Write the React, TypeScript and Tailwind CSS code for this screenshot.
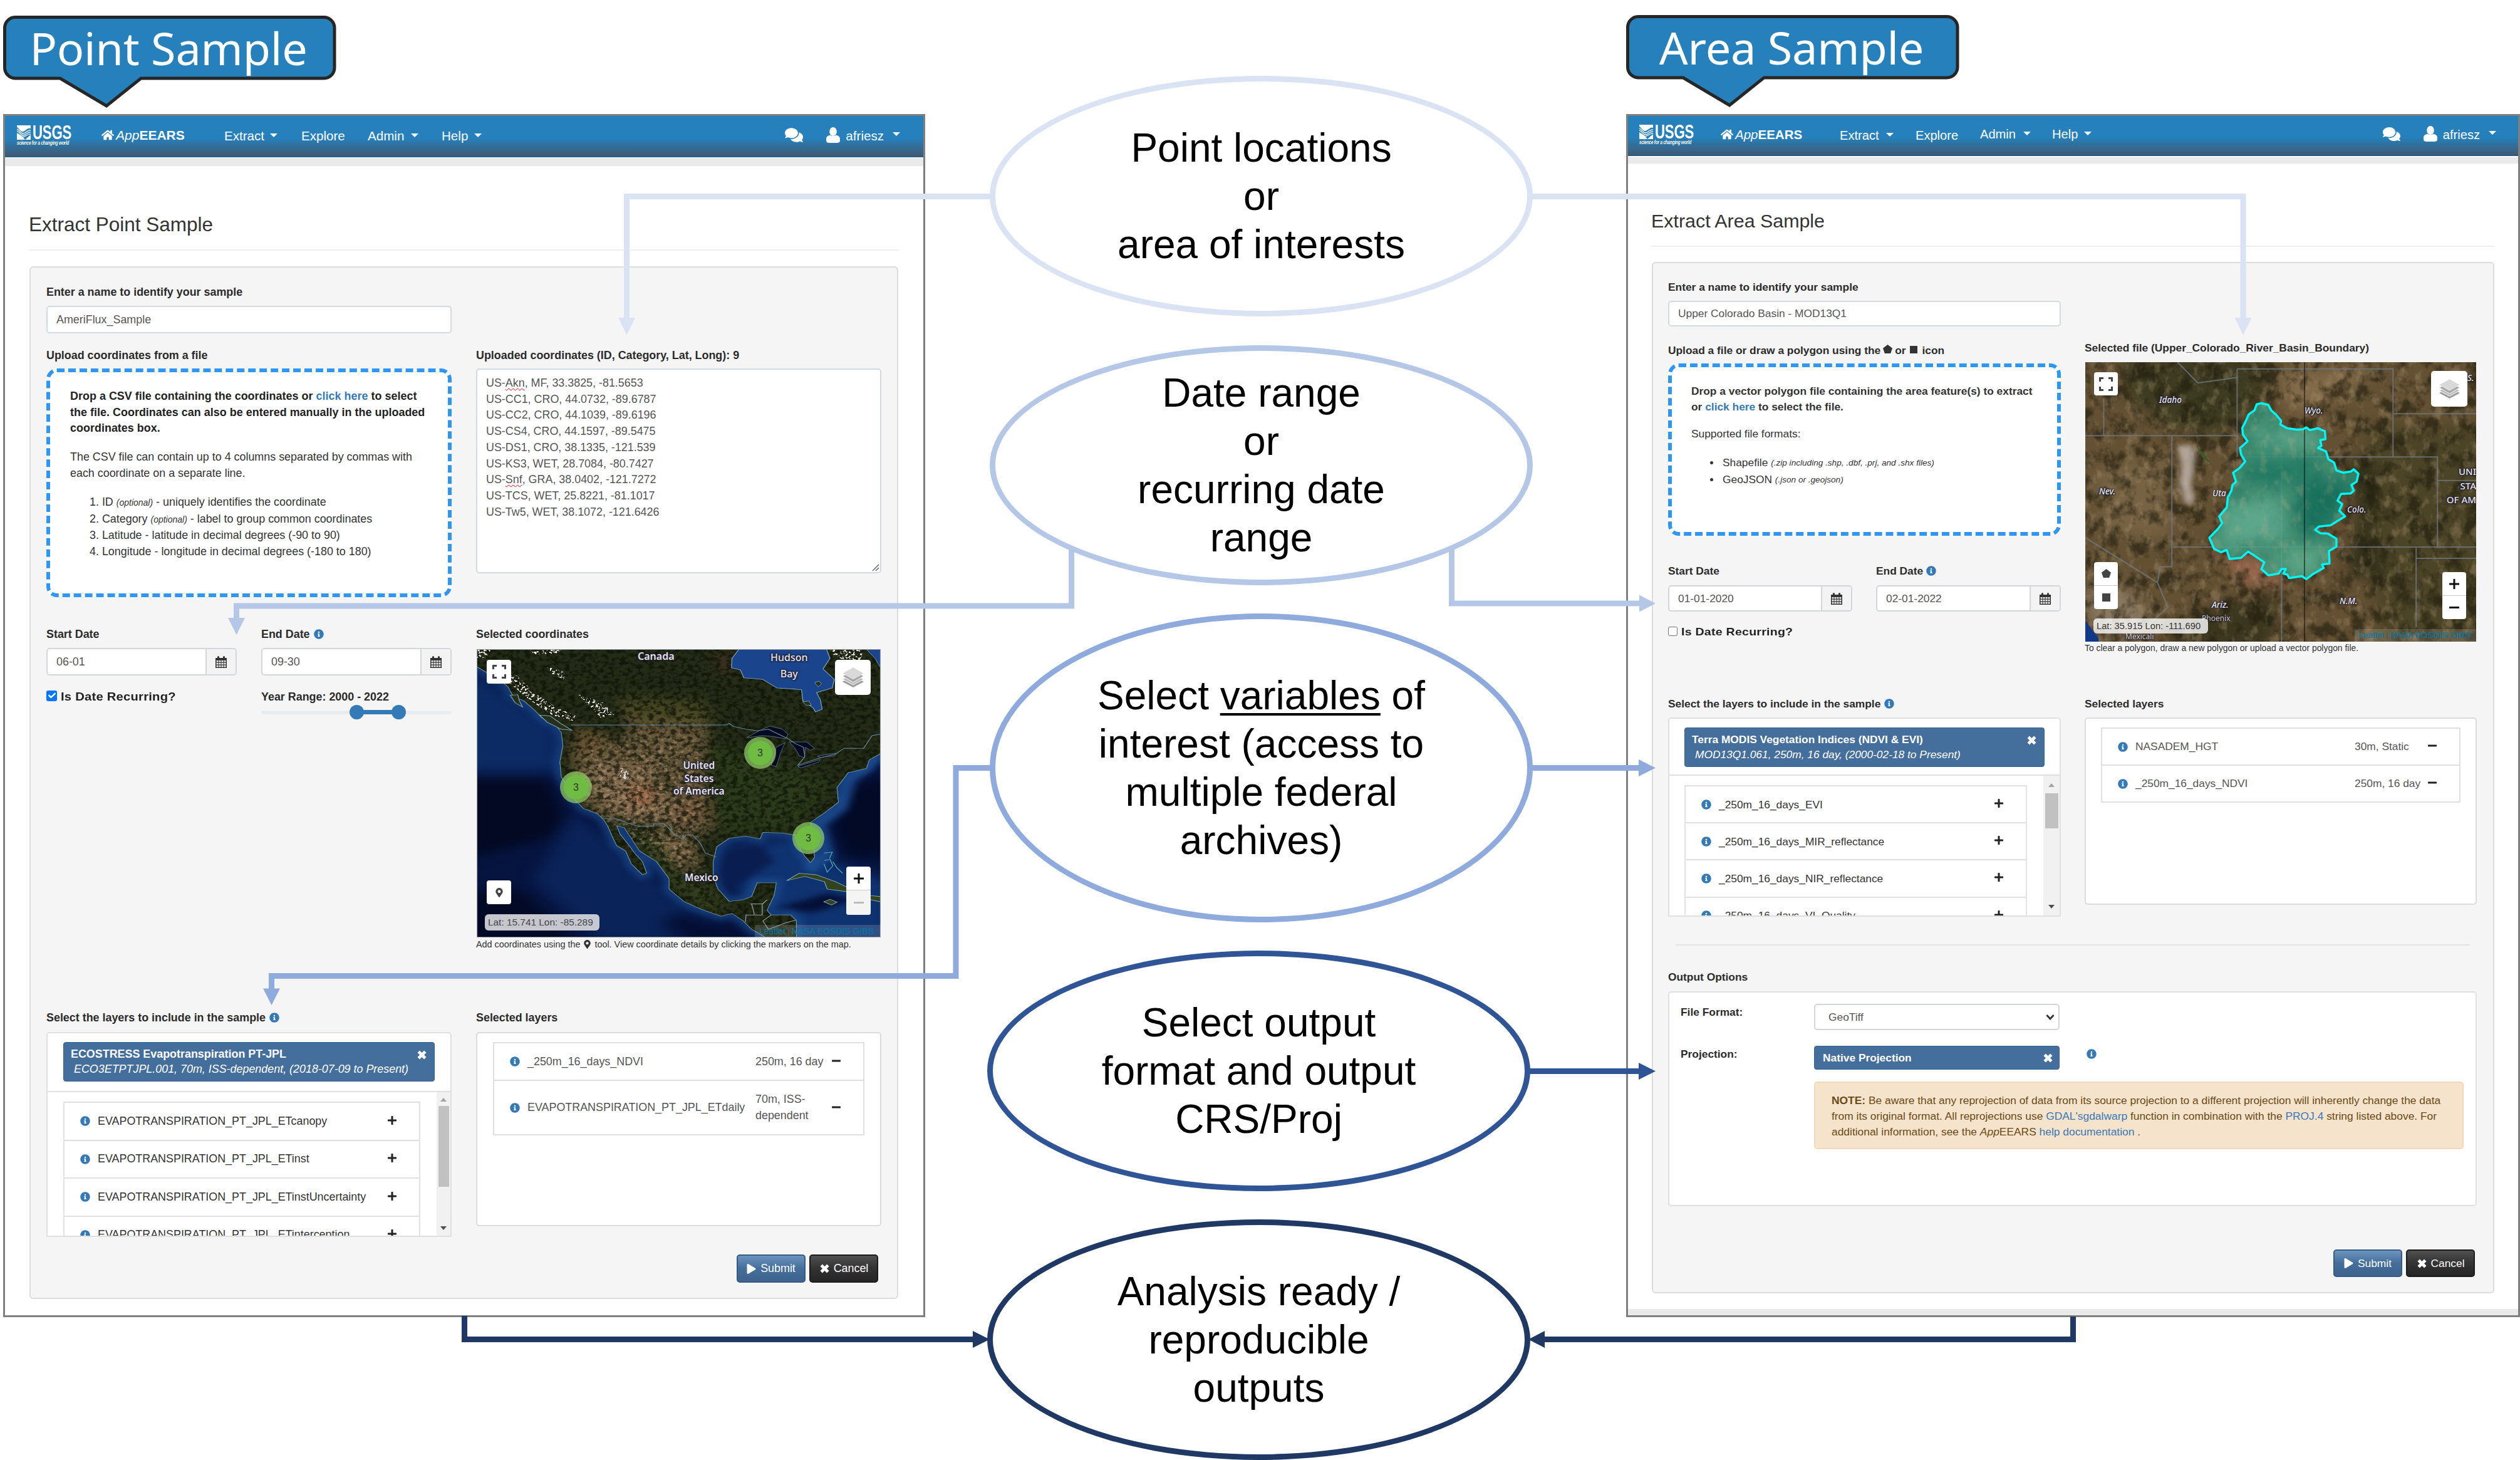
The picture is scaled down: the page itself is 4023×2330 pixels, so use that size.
import React from "react";
import {
  FaInfoCircle,
  FaPlus,
  FaMinus,
  FaHome,
  FaComments,
  FaMapMarkerAlt,
  FaPlay,
  FaCheck,
} from "react-icons/fa";

type Kids = { children?: React.ReactNode; className?: string };

/* ---------- small shared pieces ---------- */

const Info = ({ className = "" }: { className?: string }) => (
  <FaInfoCircle className={`size-4 shrink-0 text-[#337ab7] ${className}`} />
);

const Cross = ({ className = "" }: { className?: string }) => (
  <svg viewBox="0 0 16 16" className={`shrink-0 ${className}`}>
    <path d="M3 3L13 13M13 3L3 13" stroke="currentColor" strokeWidth="4.600" />
  </svg>
);

const Calendar = () => (
  <svg viewBox="0 0 18 19" className="h-[19px] w-[18px]" fill="#333">
    <path d="M0 3H3V1.500A1.500 1.500 0 0 1 6 1.500V3H12V1.500A1.500 1.500 0 0 1 15 1.500V3H18V19H0Z" />
    <path
      d="M1.500 7H4.500V9.500H1.500ZM5.500 7H8.500V9.500H5.500ZM9.500 7H12.500V9.500H9.500ZM13.500 7H16.500V9.500H13.500ZM1.500 10.700H4.500V13.500H1.500ZM5.500 10.700H8.500V13.500H5.500ZM9.500 10.700H12.500V13.500H9.500ZM13.500 10.700H16.500V13.500H13.500ZM1.500 14.700H4.500V17.500H1.500ZM5.500 14.700H8.500V17.500H5.500ZM9.500 14.700H12.500V17.500H9.500ZM13.500 14.700H16.500V17.500H13.500Z"
      fill="#eee"
    />
  </svg>
);

const UserIcon = ({ className = "" }: { className?: string }) => (
  <svg viewBox="0 0 22 25" className={`h-[25px] w-[22px] shrink-0 ${className}`} fill="#fff">
    <ellipse cx="11" cy="7" rx="5.800" ry="7" />
    <path d="M6.500 12.500C8 14.500 14 14.500 15.500 12.500C19 13.500 22 15 22 18.500V21.500C22 24 20 25 17 25H5C2 25 0 24 0 21.500V18.500C0 15 3 13.500 6.500 12.500Z" />
  </svg>
);

const Label = ({ children, className = "" }: Kids) => (
  <div className={`flex h-[26px] shrink-0 items-center whitespace-nowrap font-bold text-[#2b2b2b] ${className}`}>{children}</div>
);

const Caret = ({ className = "" }: { className?: string }) => (
  <svg viewBox="0 0 12 6" className={`h-[6px] w-3 shrink-0 ${className}`}>
    <path d="M0 0h12l-6 6z" fill="#fff" />
  </svg>
);

const Input = ({ children, className = "" }: Kids) => (
  <div className={`flex items-center rounded-[5px] border-2 border-[#d3dae1] bg-white pl-[14px] text-[#555] ${className}`}>{children}</div>
);

const DateInput = ({ value, className }: { value: string; className: string }) => (
  <div className={`flex overflow-hidden rounded-[5px] border-2 border-[#d3d6da] bg-white text-[#555] ${className}`}>
    <div className="flex flex-1 items-center pl-[14px]">{value}</div>
    <div className="flex w-12 items-center justify-center border-l-2 border-[#d3d6da] bg-[#f3f3f3]">
      <Calendar />
    </div>
  </div>
);

const Callout = ({ text, className }: { text: string; className: string }) => (
  <div className={`relative h-[149px] w-[532px] shrink-0 ${className}`}>
    <svg viewBox="0 0 532 149" className="absolute inset-0 size-full overflow-visible">
      <path
        d="M19 2.500H512A17 17 0 0 1 529 19.500V83A17 17 0 0 1 512 100H220L165 144L91 100H19A17 17 0 0 1 2.500 83V19.500A17 17 0 0 1 19 2.500Z"
        fill="#2580bb"
        stroke="#262626"
        strokeWidth="5"
      />
    </svg>
    <div className="relative flex h-[102px] items-center justify-center pr-[4px] font-['Noto_Sans'] text-[72px] leading-[102px] tracking-[-0.200px] text-white">
      {text}
    </div>
  </div>
);

const UsgsLogo = ({ className }: { className: string }) => (
  <div className={`flex shrink-0 flex-col text-white ${className}`}>
    <div className="flex h-[23px] items-center gap-[3px]">
      <svg viewBox="0 0 22 23" className="h-[23px] w-[22px] shrink-0">
        <path d="M0 0H22V5C17 3 13 10 9 10S3 4 0 3Z" fill="#fff" />
        <path d="M0 23V12L8 17L13 23ZM13 23L22 15V23Z" fill="#fff" />
        <path d="M0 6C4 7 6 13 10 13S17 7 22 8M0 9C4 10 6 16 10 16S17 10 22 11M7 19C12 20 17 13 22 14" fill="none" stroke="#fff" strokeWidth="1.300" />
      </svg>
      <span className="origin-left scale-x-[0.700] text-[32px] leading-[23px] font-bold tracking-[-0.500px]">USGS</span>
    </div>
    <span className="mt-[1px] origin-left scale-x-[0.720] text-[9px] leading-[9px] font-bold whitespace-nowrap italic tracking-[-0.300px]">
      science for a changing world
    </span>
  </div>
);

const Navbar = ({ area }: { area: boolean }) => (
  <>
    <div
      className={
        area
          ? "flex h-16 items-center border-b-2 border-[#235c85] bg-[linear-gradient(#2580bb_0%,#2580bb_55%,#405a74_100%)] pb-[2px] pl-[18px] text-[20.1px] text-white"
          : "flex h-[66px] items-center border-b-2 border-[#235c85] bg-[linear-gradient(#2580bb_0%,#2580bb_55%,#405a74_100%)] pb-[2px] pl-[19px] text-[20.6px] text-white"
      }
    >
      <UsgsLogo className={area ? "w-[130px]" : "w-[135px]"} />
      <FaHome className="mb-[2px] h-[19px] w-5 shrink-0" />
      <div className={area ? "ml-[3px] w-[167px] text-[20.5px] whitespace-nowrap" : "ml-[3px] w-[173px] text-[21px] whitespace-nowrap"}>
        <i>App</i>
        <b>EEARS</b>
      </div>
      <span className={area ? "mt-[2px] w-[74px]" : "mt-[2px] w-[73px]"}>Extract</span>
      <Caret className={area ? "mr-[35px] mb-[1px]" : "mr-[38px] mb-[1px]"} />
      <span className={area ? "mt-[2px] w-[103px]" : "mt-[2px] w-[106px]"}>Explore</span>
      <span className={area ? "mb-[2px] w-[69px]" : "mt-[2px] w-[69px]"}>Admin</span>
      <Caret className={area ? "mr-[34px] mb-[4px]" : "mr-[37px] mb-[1px]"} />
      <span className={area ? "mb-[2px] w-[51px]" : "mt-[2px] w-[52px]"}>Help</span>
      <Caret className={area ? "mb-[4px]" : "mb-[1px]"} />
      <div className={area ? "flex flex-1 items-center justify-end pr-[35px] pb-[2px]" : "flex flex-1 items-center justify-end pr-[37px] pb-0"}>
        <FaComments className={area ? "mr-[37px] h-[26px] w-[28px]" : "mr-[37px] h-[27px] w-[29px]"} />
        <UserIcon className="mr-[9px]" />
        <span className="mt-[2px] mr-[14px]">afriesz</span>
        <Caret className="mb-[3px]" />
      </div>
    </div>
    <div className={area ? "mt-[2px] h-[10px] bg-[#eaeaea]" : "mt-[1px] h-[13px] bg-[#eaeaea]"} />
  </>
);

const LayerPicker = ({
  title,
  sub,
  layers,
  area,
}: {
  title: string;
  sub: string;
  layers: string[];
  area: boolean;
}) => (
  <>
    <div
      className={
        area
          ? "h-[93px] rounded-t-[5px] border-2 border-[#e0e0e0] bg-white px-6 pt-[14px]"
          : "h-[96px] rounded-t-[5px] border-2 border-[#e0e0e0] bg-white px-[25px] pt-[14px]"
      }
    >
      <div className="flex h-[63px] rounded-[4px] border border-[#37618f] bg-[#446e9b] pt-[3px] pl-[11px] text-white">
        <div className="flex-1 whitespace-nowrap">
          <div className="h-[27px] leading-[31px] font-bold">{title}</div>
          <div className="ml-[5px] leading-[24px] italic">{sub}</div>
        </div>
        <Cross className="mt-[8px] mr-[11px] size-[17px]" />
      </div>
    </div>
    <div
      className={
        area
          ? "flex h-[225px] overflow-hidden border-x-2 border-b-2 border-[#e0e0e0] bg-white"
          : "flex h-[231px] overflow-hidden border-x-2 border-b-2 border-[#e0e0e0] bg-white"
      }
    >
      <div className={area ? "flex-1 pt-[15px] pr-[26px] pl-6" : "flex-1 pt-[15px] pr-[26px] pl-[25px]"}>
        <div className="border-2 border-t-0 border-[#e3e3e3]">
          {layers.map((l) => (
            <div
              key={l}
              className={
                area
                  ? "flex h-[59.2px] items-center border-t-2 border-[#e0e0e0] pl-[25px] text-[#333]"
                  : "flex h-[60.5px] items-center border-t-2 border-[#e0e0e0] pl-[25px] text-[#333]"
              }
            >
              <Info />
              <span className="ml-[12px] flex-1">{l}</span>
              <FaPlus className="mr-[35px] mb-[3px] size-4 text-[#222]" />
            </div>
          ))}
        </div>
      </div>
      <div className={area ? "flex w-[26px] flex-col items-center bg-[#f1f1f1] pt-[12px]" : "flex w-[22px] flex-col items-center bg-[#f1f1f1] pt-[9px]"}>
        <svg viewBox="0 0 10 6" className="h-[6px] w-[10px]">
          <path d="M5 0L10 6H0Z" fill="#a3a3a3" />
        </svg>
        <div className={area ? "mt-[10px] h-[56px] w-[21px] bg-[#c1c1c1]" : "mt-[7px] h-[129px] w-[17px] bg-[#c1c1c1]"} />
        <div className="flex-1" />
        <svg viewBox="0 0 10 6" className={area ? "mb-[11px] h-[6px] w-[10px]" : "mb-[9px] h-[6px] w-[10px]"}>
          <path d="M5 6L10 0H0Z" fill="#505050" />
        </svg>
      </div>
    </div>
  </>
);

const Buttons = ({ className }: { className: string }) => (
  <div className={`flex justify-end gap-[6px] text-white ${className}`}>
    <div className="flex w-[110px] items-center justify-center gap-[7px] rounded-[5px] border-2 border-[#355b82] bg-linear-to-b from-[#6d94bf] via-[#446e9b] to-[#3e648d]">
      <FaPlay className="h-[16px] w-[15px]" />
      Submit
    </div>
    <div className="flex w-[110px] items-center justify-center gap-[6px] rounded-[5px] border-2 border-[#1c1c1c] bg-linear-to-b from-[#505050] via-[#333] to-[#262626]">
      <Cross className="size-[17px]" />
      Cancel
    </div>
  </div>
);

const LayersIcon = ({ className }: { className: string }) => (
  <svg viewBox="0 0 34 34" className={className}>
    <path d="M17 15L34 24L17 33L0 24Z" fill="#9c9c9c" />
    <path d="M17 11L34 20L17 29L0 20Z" fill="#bdbdbd" stroke="#fff" strokeWidth="1" />
    <path d="M17 6L34 15L17 25L0 15Z" fill="#a6a6a6" stroke="#fff" strokeWidth="1" />
    <path d="M17 1L34 10.500L17 20L0 10.500Z" fill="#d9d9d9" stroke="#fff" strokeWidth="0.500" />
  </svg>
);

const FullscreenButton = ({ className }: { className: string }) => (
  <div className={`absolute flex items-center justify-center rounded-[4px] bg-white ${className}`}>
    <svg viewBox="0 0 22 22" className="size-[22px]">
      <path d="M1.500 7V1.500H7M15 1.500H20.500V7M20.500 15V20.500H15M7 20.500H1.500V15" fill="none" stroke="#444" strokeWidth="3" />
    </svg>
  </div>
);

const Cluster = ({ className }: { className: string }) => (
  <div className={`absolute flex size-[51px] items-center justify-center rounded-full bg-[#8fc766]/75 ${className}`}>
    <div className="flex size-[39px] items-center justify-center rounded-full bg-[#6ebf40]/90 text-[16px] text-[#333]">3</div>
  </div>
);

const MapLabel = ({ children, className = "" }: Kids) => (
  <div
    className={`absolute text-center font-['Noto_Sans'] whitespace-nowrap text-[#e6e2ee] [text-shadow:0_0_3px_#223,0_0_3px_#223,0_0_3px_#223,0_0_2px_#223] ${className}`}
  >
    {children}
  </div>
);

/* ---------- maps ---------- */

const LAND =
  "M48 107V190L90 222L130 252L160 285L178 330L215 350L255 395L280 430L330 465L350 500L356 560L345 640L350 710L375 760L400 820L430 860L480 885L500 910L515 940L530 985L548 1035L580 1060L600 1120L640 1172L655 1165L640 1110L615 1075L590 1030L560 980L548 940L575 950L600 1000L630 1060L690 1110L735 1190L735 1240L790 1300L850 1335L920 1368L960 1355L1000 1390L1030 1430L1080 1468H1190V1390L1170 1362L1100 1362L1085 1340L1110 1270L1118 1210L1050 1210L1030 1275L1000 1290L950 1298L910 1240L893 1180V1110L905 1040L950 1000L1010 990L1060 1003L1070 972L1140 975L1185 985L1195 1030L1220 1085L1240 1115L1255 1090L1250 1020L1240 925L1290 880L1340 830L1335 760L1375 690L1440 670L1450 630L1491 600V107Z";

const PointMap = () => (
  <div className="relative mt-[11px] ml-[1px] h-[460px] w-[645px] shrink-0 overflow-hidden bg-[#04103a]">
    <svg viewBox="48 107 1443 1361" preserveAspectRatio="none" className="absolute inset-0 size-full">
      <defs>
        <filter id="pm-soft" x="-30%" y="-30%" width="160%" height="160%" colorInterpolationFilters="sRGB">
          <feGaussianBlur stdDeviation="26" />
        </filter>
        <filter id="pm-glow" x="-20%" y="-20%" width="140%" height="140%" colorInterpolationFilters="sRGB">
          <feGaussianBlur stdDeviation="14" />
        </filter>
        <filter id="pm-grain" x="0" y="0" width="100%" height="100%" colorInterpolationFilters="sRGB">
          <feTurbulence type="fractalNoise" baseFrequency="0.05 0.055" numOctaves="5" seed="4" />
          <feColorMatrix values="0 0 0 0 0.050  0 0 0 0 0.070  0 0 0 0 0.020  4 0 0 0 -1.700" />
        </filter>
        <filter id="pm-light" x="0" y="0" width="100%" height="100%" colorInterpolationFilters="sRGB">
          <feTurbulence type="fractalNoise" baseFrequency="0.06 0.065" numOctaves="5" seed="9" />
          <feColorMatrix values="0 0 0 0 0.780  0 0 0 0 0.660  0 0 0 0 0.520  5 0 0 0 -2.500" />
        </filter>
        <filter id="pm-snow" x="0" y="0" width="100%" height="100%" colorInterpolationFilters="sRGB">
          <feTurbulence type="fractalNoise" baseFrequency="0.11 0.11" numOctaves="4" seed="2" result="n" />
          <feColorMatrix in="n" values="0 0 0 0 0.920  0 0 0 0 0.920  0 0 0 0 0.900  12 0 0 0 -6.500" result="m" />
          <feComposite in="m" in2="SourceAlpha" operator="in" />
        </filter>
        <clipPath id="pm-land">
          <path d={LAND} />
        </clipPath>
        <mask id="pm-west" maskUnits="userSpaceOnUse" x="48" y="107" width="1443" height="1361">
          <path
            d="M430 560L620 500L850 520L860 900L830 1100L880 1300L760 1120L620 1050L480 880L420 780Z"
            fill="#fff"
            filter="url(#pm-soft)"
          />
        </mask>
      </defs>
      <rect x="48" y="107" width="1443" height="1361" fill="#061440" />
      <g filter="url(#pm-soft)">
        <path d="M0 180L340 470L350 690L0 690Z" fill="#0c2a63" />
        <path d="M400 880L740 1240L1040 1500H500L250 1200Z" fill="#0a2358" />
        <path d="M0 720H300L360 900L300 1000L0 1100Z" fill="#030922" />
        <path d="M0 1250H220L400 1500H0Z" fill="#030a26" />
        <path d="M1370 760L1520 700V1080L1380 1100L1320 950Z" fill="#020a26" />
        <path d="M900 1050L1180 990L1290 1100L1520 1200V1500H1180L1120 1340L1000 1300Z" fill="#0f3370" />
        <path d="M780 1350L980 1430L1060 1500H820L700 1400Z" fill="#040e34" />
      </g>
      <path d="M930 1060L1060 1020L1110 1110L1030 1180L960 1240L915 1190Z" fill="#0a1d50" filter="url(#pm-glow)" />
      <path d="M1120 1330L1300 1260L1400 1290L1250 1350Z" fill="#050f36" filter="url(#pm-glow)" />
      <path d={LAND} fill="none" stroke="#1d4f94" strokeWidth="40" opacity="0.650" filter="url(#pm-glow)" />
      <path d="M1480 610L1380 720L1350 850L1270 930L1300 1080L1230 1150" fill="none" stroke="#1d4f94" strokeWidth="50" opacity="0.800" filter="url(#pm-glow)" />
      <g clipPath="url(#pm-land)">
        <rect x="48" y="107" width="1443" height="1361" fill="#242c18" />
        <g filter="url(#pm-soft)">
          <path d="M560 350L740 360L880 470L860 700L890 880L900 980L800 960L720 940L480 900L400 760L380 560L470 500L600 520Z" fill="#66563a" />
          <path d="M400 480L510 500L500 600L400 600Z" fill="#6b5434" />
          <path d="M440 640L700 660L740 920L520 900Z" fill="#846c50" />
          <path d="M600 750L690 760L670 850L600 840Z" fill="#9c6444" />
          <path d="M740 840L880 800L860 920L760 930Z" fill="#70543a" />
          <path d="M880 560L1180 660L1330 740L1180 950L920 980L890 760Z" fill="#2c3b1b" />
          <path d="M700 960L800 980L850 1120L780 1150L680 1010Z" fill="#7b6446" />
          <path d="M620 960L690 1000L780 1180L950 1310L880 1350L740 1220L650 1060Z" fill="#35411f" />
          <path d="M540 330L860 350L900 440L640 450Z" fill="#464722" />
          <path d="M880 120L980 110L960 260L900 200Z" fill="#3a2f20" />
          <path d="M480 480L590 500L600 560L520 540Z" fill="#2a2e1a" />
          <path d="M690 680L740 690L730 780L690 770Z" fill="#3a3a22" />
        </g>
        <g mask="url(#pm-west)" opacity="0.450">
          <rect x="48" y="107" width="1443" height="1361" filter="url(#pm-light)" />
        </g>
        <rect x="48" y="107" width="1443" height="1361" filter="url(#pm-grain)" opacity="0.700" />
        <path
          d="M48 107H100L80 150L48 150ZM150 200L200 240L250 310L330 380L400 420V450L320 420L230 340L160 260ZM240 107H360L320 135L250 130ZM300 190L360 215L360 250L310 220ZM410 320L500 360L540 420L490 430ZM560 670H590V720H560Z"
          filter="url(#pm-snow)"
        />
        <path d="M1310 107H1430L1420 160L1330 150Z" filter="url(#pm-snow)" />
      </g>
      <path d={LAND} fill="none" stroke="#84b0bd" strokeWidth="2.400" strokeLinejoin="round" opacity="0.850" />
      <path
        d="M985 107L960 150L958 195L990 205L1002 242L1070 250L1120 290L1208 298L1213 350L1250 385L1258 403L1282 390L1275 345L1262 312L1318 290L1325 250L1285 200L1310 150L1297 107Z"
        fill="#1a458c"
        stroke="#84b0bd"
        strokeWidth="2.600"
      />
      <path d="M1440 107L1470 150L1491 195V107Z" fill="#1a458c" stroke="#84b0bd" strokeWidth="2" />
      <path d="M1255 265L1270 258L1280 270L1268 285ZM1212 355L1235 352L1243 372L1225 372Z" fill="#28301b" stroke="#84b0bd" strokeWidth="2" />
      <path
        d="M168 325L195 322L200 350L212 380L185 360ZM272 418L310 422L345 455L388 490L350 485L300 452Z"
        fill="#28301b"
        stroke="#84b0bd"
        strokeWidth="2.600"
      />
      <path
        d="M1012 525L1060 490L1095 470L1140 485L1160 510L1150 530L1110 520L1070 515ZM1150 548L1118 570L1100 655L1118 662L1130 610L1140 575ZM1165 545L1225 545L1255 575L1240 585L1222 570L1218 620L1200 610L1185 575ZM1195 660L1275 628L1270 640L1205 668ZM1265 612L1330 598L1325 610L1275 618Z"
        fill="#050a20"
        stroke="#5f7f92"
        strokeWidth="2"
      />
      <path
        d="M385 465H940L950 458L965 472L1010 485L1050 492L1090 485L1160 530L1185 552L1215 570L1220 615L1195 655L1275 620L1330 602L1360 575H1430L1460 515L1491 508"
        fill="none"
        stroke="#6b8ba0"
        strokeWidth="3"
      />
      <path d="M498 908L545 908L620 942H680V932H718L750 975L785 1005L795 985L820 985L845 1020L865 1070L903 1088" fill="none" stroke="#5d8296" strokeWidth="3" />
      <path
        d="M1025 1310H1070L1085 1290L1068 1310V1362H1010L1008 1395M1030 1310L1040 1360M1100 1362L1070 1390L1090 1430L1150 1400L1190 1385"
        fill="none"
        stroke="#8d9aa0"
        strokeWidth="3"
      />
      <path
        d="M1155 1200L1200 1165L1260 1172L1330 1205L1385 1240L1370 1252L1300 1240L1290 1205L1220 1180ZM1288 1300L1310 1288L1335 1302L1315 1315ZM1450 1270L1491 1275V1300L1455 1290Z"
        fill="#33421f"
        stroke="#84b0bd"
        strokeWidth="2.600"
      />
      <path d="M1288 1070L1318 1065L1308 1095M1320 1110L1335 1140L1355 1165M1290 1105L1310 1100L1320 1130L1300 1160L1288 1120" fill="none" stroke="#4fa9b8" strokeWidth="3" />
      <rect x="49" y="108" width="1441" height="1359" fill="none" stroke="#9aa0a6" strokeWidth="3" />
    </svg>
    <MapLabel className="top-[3px] left-[257px] text-[16px] leading-[16px] font-semibold">Canada</MapLabel>
    <MapLabel className="top-0 left-[469px] text-[16px] leading-[26px] font-medium">
      Hudson
      <br />
      Bay
    </MapLabel>
    <MapLabel className="top-[175px] left-[314px] text-[15.500px] leading-[20.700px] font-semibold">
      United
      <br />
      States
      <br />
      of America
    </MapLabel>
    <MapLabel className="top-[354px] left-[332px] text-[15.500px] leading-[20px] font-semibold">Mexico</MapLabel>
    <Cluster className="top-[195px] left-[133px]" />
    <Cluster className="top-[140px] left-[427px]" />
    <Cluster className="top-[276px] left-[504px]" />
    <FullscreenButton className="top-[17px] left-[16px] h-[38px] w-[39px]" />
    <div className="absolute top-[17px] right-[16px] flex h-14 w-[57px] items-center justify-center rounded-[5px] bg-white">
      <LayersIcon className="size-[34px]" />
    </div>
    <div className="absolute top-[369px] left-[16px] flex h-[38px] w-[39px] items-center justify-center rounded-[4px] bg-white">
      <FaMapMarkerAlt className="h-[15px] w-3 text-[#444]" />
    </div>
    <div className="absolute top-[423px] left-[13px] flex h-[26px] w-[183px] items-center rounded-[6px] bg-[#dcdce0]/90 pl-[5px] text-[15.400px] whitespace-nowrap text-[#444]">
      Lat: 15.741 Lon: -85.289
    </div>
    <div className="absolute top-[347px] right-[16px] flex h-[77px] w-[39px] flex-col overflow-hidden rounded-[4px] bg-white">
      <div className="flex h-[38px] items-center justify-center border-b border-[#ccc]">
        <svg viewBox="0 0 16 16" className="size-4">
          <path d="M8 0V16M0 8H16" stroke="#111" strokeWidth="3" />
        </svg>
      </div>
      <div className="flex flex-1 items-center justify-center bg-[#f4f4f4]">
        <div className="h-[3px] w-4 bg-[#bbb]" />
      </div>
    </div>
    <div className="absolute right-0 bottom-0 flex h-5 w-[201px] items-center bg-white/15 pl-[7px] text-[14px] whitespace-nowrap text-[#0078a8]">
      Leaflet <span className="px-[3px] text-[#555]">|</span> NASA EOSDIS GIBS
    </div>
  </div>
);

const BASIN =
  "M1112 405L1120 400L1132 408L1137 432L1145 450L1154 478L1153 495L1165 512L1182 518L1192 516L1198 508L1204 520L1218 512L1230 525L1231 560L1222 565L1224 590L1218 600L1232 615L1236 650L1246 665L1250 700L1262 710L1275 705L1280 695L1288 715L1285 750L1276 765L1280 790L1275 803L1258 805L1252 835L1260 850L1255 880L1265 905L1252 925L1240 945L1220 950L1213 965L1222 980L1235 982L1250 1005L1250 1040L1237 1060L1238 1115L1225 1120L1228 1135L1208 1165L1198 1185L1190 1172L1168 1180L1165 1165L1158 1160L1162 1140L1155 1140L1150 1160L1132 1168L1120 1140L1125 1110L1105 1075L1097 1062L1085 1090L1065 1095L1060 1055L1050 1065L1038 1050L1030 1000L1045 960L1052 935L1047 905L1060 865L1062 820L1068 790L1070 765L1076 750L1071 710L1082 690L1092 660L1085 630L1083 600L1096 570L1088 540L1087 510L1092 485L1098 450L1108 432Z";

const AreaMap = () => (
  <div className="relative mt-[10px] ml-[1px] h-[446px] w-[624px] shrink-0 overflow-hidden bg-[#55452b]">
    <svg viewBox="815 217 677 1247" preserveAspectRatio="none" className="absolute inset-0 size-full">
      <defs>
        <filter id="am-soft" x="-30%" y="-30%" width="160%" height="160%" colorInterpolationFilters="sRGB">
          <feGaussianBlur stdDeviation="14 34" />
        </filter>
        <filter id="am-edge" x="-30%" y="-30%" width="160%" height="160%" colorInterpolationFilters="sRGB">
          <feGaussianBlur stdDeviation="5 12" />
        </filter>
        <filter id="am-dark" x="0" y="0" width="100%" height="100%" colorInterpolationFilters="sRGB">
          <feTurbulence type="fractalNoise" baseFrequency="0.04 0.013" numOctaves="6" seed="11" />
          <feColorMatrix values="0 0 0 0 0.120  0 0 0 0 0.110  0 0 0 0 0.050  4 0 0 0 -1.800" />
        </filter>
        <filter id="am-light" x="0" y="0" width="100%" height="100%" colorInterpolationFilters="sRGB">
          <feTurbulence type="fractalNoise" baseFrequency="0.06 0.017" numOctaves="6" seed="3" />
          <feColorMatrix values="0 0 0 0 0.720  0 0 0 0 0.630  0 0 0 0 0.480  4 0 0 0 -2.100" />
        </filter>
        <clipPath id="am-basin">
          <path d={BASIN} />
        </clipPath>
      </defs>
      <rect x="815" y="217" width="677" height="1247" fill="#645134" />
      <g filter="url(#am-soft)">
        <path d="M880 180H1140L1120 420L1050 540L960 500L890 380Z" fill="#3d3b21" />
        <path d="M1300 500H1520V1500H1330L1300 1000Z" fill="#4c4427" />
        <path d="M1270 640L1320 660L1310 1000L1340 1200L1270 1150L1290 900Z" fill="#2b2c17" />
        <path d="M1050 1060L1150 1120L1160 1260L1080 1200Z" fill="#96664c" />
        <path d="M820 1200L900 1240L930 1400L860 1464L820 1380Z" fill="#8a7861" />
        <path d="M960 1400L1150 1200L1140 1500H960Z" fill="#3b361e" />
        <path d="M1150 260L1330 250L1200 450L1160 400Z" fill="#826b49" />
        <path d="M830 700L960 620L960 1000L850 980Z" fill="#776344" />
      </g>
      <rect x="815" y="217" width="677" height="1247" filter="url(#am-dark)" opacity="0.600" />
      <rect x="815" y="217" width="677" height="1247" filter="url(#am-light)" opacity="0.300" />
      <path d="M975 590L1000 585L1006 640L998 760L1005 830L990 860L978 760L982 680Z" fill="#c4b8b0" opacity="0.800" filter="url(#am-edge)" />
      <path d="M1006 585L1018 620L1034 670L1020 650Z" fill="#3b5a2b" />
      <path d="M815 1370L838 1450V1464H815Z" fill="#12388a" />
      <path
        d="M815 545H1078M1078 247H1348V640M1078 247V640M1092 640H1425V1045M847 380V545M965 545V1042H1492M975 217L1010 310L1078 285M1348 447H1492M1425 745H1492M1155 640V1464M815 1000L940 1200L945 1130L965 1130V1042M940 1200L958 1310L920 1400M1388 1045V1400M1388 1092H1492"
        fill="none"
        stroke="#6f7880"
        strokeWidth="2"
        opacity="0.800"
        vectorEffect="non-scaling-stroke"
      />
      <path d={BASIN} fill="#33a78c" fillOpacity="0.700" />
      <g clipPath="url(#am-basin)">
        <g filter="url(#am-soft)">
          <path d="M1090 640L1210 640L1220 760L1100 760Z" fill="#17745f" opacity="0.650" />
          <path d="M1190 760L1280 720L1250 920L1200 1020L1180 900Z" fill="#0f6a58" opacity="0.800" />
          <path d="M1060 860L1150 820L1160 1000L1050 1040Z" fill="#6fb9a0" opacity="0.600" />
          <path d="M1110 520L1220 520L1220 600L1110 600Z" fill="#6fb9a0" opacity="0.500" />
          <path d="M1150 1050L1240 1050L1210 1180L1150 1140Z" fill="#6fb594" opacity="0.600" />
        </g>
        <rect x="1020" y="390" width="280" height="810" filter="url(#am-light)" opacity="0.200" />
      </g>
      <path d="M1195 217V1464" stroke="#111" strokeWidth="1.500" vectorEffect="non-scaling-stroke" opacity="0.700" />
      <path d={BASIN} fill="none" stroke="#00f6f6" strokeWidth="3.500" vectorEffect="non-scaling-stroke" strokeLinejoin="round" />
    </svg>
    <MapLabel className="top-[51px] left-[118px] text-[13.500px] leading-[18px] font-medium italic">Idaho</MapLabel>
    <MapLabel className="top-[68px] left-[350px] text-[13.500px] leading-[18px] font-medium italic">Wyo.</MapLabel>
    <MapLabel className="top-[197px] left-[22px] text-[13.500px] leading-[18px] font-medium italic">Nev.</MapLabel>
    <div className="absolute top-[200px] left-[203px] font-['Noto_Sans'] text-[13.500px] leading-[18px] font-medium text-[#e6e2ee] italic [text-shadow:0_0_3px_#223,0_0_3px_#223]">
      Uta
    </div>
    <MapLabel className="top-[226px] left-[418px] text-[13.500px] leading-[18px] font-medium italic">Colo.</MapLabel>
    <MapLabel className="top-[378px] left-[202px] text-[13.500px] leading-[18px] font-medium italic">Ariz.</MapLabel>
    <MapLabel className="top-[372px] left-[406px] text-[13.500px] leading-[18px] font-medium italic">N.M.</MapLabel>
    <MapLabel className="top-[400px] left-[186px] text-[12px] leading-[18px] opacity-80">Phoenix</MapLabel>
    <MapLabel className="top-[430px] left-[64px] text-[12px] leading-[16px] opacity-80">Mexicali</MapLabel>
    <MapLabel className="top-[16px] left-[610px] text-[13.500px] leading-[18px] font-medium italic">S.</MapLabel>
    <MapLabel className="top-[163px] right-0 text-right text-[15px] leading-[22.500px] font-medium">
      <div>UNI</div>
      <div>STA</div>
      <div>OF AM</div>
    </MapLabel>
    <FullscreenButton className="top-[16px] left-[14px] h-[37px] w-[38px]" />
    <div className="absolute top-[14px] right-[14px] flex h-[57px] w-[58px] items-center justify-center rounded-[5px] bg-white">
      <LayersIcon className="size-[33px]" />
    </div>
    <div className="absolute top-[319px] left-[14px] flex h-[75px] w-[38px] flex-col rounded-[4px] bg-white">
      <div className="flex flex-1 items-center justify-center border-b border-[#ccc]">
        <svg viewBox="0 0 16 16" className="size-[15px]">
          <path d="M8 0L16 6L13 15H3L0 6Z" fill="#444" />
        </svg>
      </div>
      <div className="flex flex-1 items-center justify-center">
        <div className="size-[13px] bg-[#444]" />
      </div>
    </div>
    <div className="absolute top-[409px] left-[13px] flex h-[24px] w-[183px] items-center rounded-[6px] bg-white/80 pl-[5px] text-[14.700px] whitespace-nowrap text-[#333]">
      Lat: 35.915 Lon: -111.690
    </div>
    <div className="absolute top-[335px] right-[16px] flex h-[75px] w-[38px] flex-col rounded-[4px] bg-white">
      <div className="flex flex-1 items-center justify-center border-b border-[#ccc]">
        <svg viewBox="0 0 16 16" className="size-4">
          <path d="M8 0V16M0 8H16" stroke="#111" strokeWidth="3" />
        </svg>
      </div>
      <div className="flex flex-1 items-center justify-center">
        <div className="h-[3px] w-4 bg-[#111]" />
      </div>
    </div>
    <div className="absolute right-0 bottom-0 flex h-5 w-[194px] items-center bg-white/15 pl-[6px] text-[13.700px] whitespace-nowrap text-[#0078a8]">
      Leaflet <span className="px-[3px] text-[#555]">|</span> NASA EOSDIS GIBS
    </div>
  </div>
);

/* ---------- panels ---------- */

const Wavy = ({ children }: Kids) => (
  <span className="underline decoration-[#f00] decoration-wavy decoration-[1px] underline-offset-[2px]">{children}</span>
);

const POINTS: [string, string][] = [
  ["CC1", ", CRO, 44.0732, -89.6787"],
  ["CC2", ", CRO, 44.1039, -89.6196"],
  ["CS4", ", CRO, 44.1597, -89.5475"],
  ["DS1", ", CRO, 38.1335, -121.539"],
  ["KS3", ", WET, 28.7084, -80.7427"],
  ["Snf", ", GRA, 38.0402, -121.7272"],
  ["TCS", ", WET, 25.8221, -81.1017"],
  ["Tw5", ", WET, 38.1072, -121.6426"],
];

const PointPanel = () => (
  <div className="flex h-[1920px] w-[1472px] flex-col border-[3px] border-[#7f7f7f] bg-white text-[17.9px]">
    <Navbar area={false} />
    <div className="mt-[73px] ml-[38px] h-10 text-[31.500px] leading-10 text-[#333]">Extract Point Sample</div>
    <div className="mt-5 mr-[39px] ml-[38px] h-[2px] bg-[#eee]" />
    <div className="mt-[25px] ml-[39px] h-[1648px] w-[1387px] rounded-[6px] border-2 border-[#dcdcdc] bg-[#f5f5f5] pt-[26px] pr-[25px] pl-[25px]">
      <Label>Enter a name to identify your sample</Label>
      <Input className="mt-[9px] h-11 w-[647px]">AmeriFlux_Sample</Input>

      <div className="mt-[22px] flex h-[399px] gap-[39px]">
        <div className="w-[647px]">
          <Label>Upload coordinates from a file</Label>
          <div className="mt-2 h-[365px] rounded-[17px] border-[6px] border-dashed border-[#2f96f3] bg-white pt-[26px] pl-8 leading-[25.7px] whitespace-nowrap text-[#333]">
            <div className="font-bold tracking-[0.040px] text-[#222]">
              Drop a CSV file containing the coordinates or <span className="text-[#337ab7]">click here</span> to select
              <br />
              the file. Coordinates can also be entered manually in the uploaded
              <br />
              coordinates box.
            </div>
            <div className="mt-[20px]">
              The CSV file can contain up to 4 columns separated by commas with
              <br />
              each coordinate on a separate line.
            </div>
            <div className="mt-[20.500px] pl-[31px]">
              1. ID <i className="text-[14px]">(optional)</i> - uniquely identifies the coordinate
              <br />
              2. Category <i className="text-[14px]">(optional)</i> - label to group common coordinates
              <br />
              3. Latitude - latitude in decimal degrees (-90 to 90)
              <br />
              4. Longitude - longitude in decimal degrees (-180 to 180)
            </div>
          </div>
        </div>
        <div className="w-[647px]">
          <Label>Uploaded coordinates (ID, Category, Lat, Long): 9</Label>
          <div className="mt-2 flex h-[327px] rounded-[5px] border-2 border-[#d3dae1] bg-white pt-[9px] pl-[14px] leading-[25.7px] text-[#555]">
            <div className="flex-1">
              <div>
                US-<Wavy>Akn</Wavy>, MF, 33.3825, -81.5653
              </div>
              {POINTS.map(([id, rest]) => (
                <div key={id}>
                  US-{id === "Snf" ? <Wavy>Snf</Wavy> : id}
                  {rest}
                </div>
              ))}
            </div>
            <svg viewBox="0 0 12 12" className="mr-[1px] mb-[1px] size-3 self-end">
              <path d="M1 11L11 1M6 11L11 6" stroke="#555" strokeWidth="1.200" />
            </svg>
          </div>
        </div>
      </div>

      <div className="mt-[46px] flex h-[519px] gap-[39px]">
        <div className="w-[647px]">
          <div className="flex gap-[39px]">
            <div className="w-[304px]">
              <Label>Start Date</Label>
              <DateInput value="06-01" className="mt-[9px] h-11" />
              <div className="mt-[21px] flex h-[26px] items-center whitespace-nowrap">
                <div className="mb-[4px] flex size-[17px] items-center justify-center rounded-[3px] bg-[#0075ff]">
                  <FaCheck className="size-[12px] text-white" />
                </div>
                <span className="ml-[6px] origin-left scale-x-[1.130] font-bold tracking-[0.200px] text-[#222]">Is Date Recurring?</span>
              </div>
            </div>
            <div className="w-[304px]">
              <Label>
                End Date <Info className="ml-[6px]" />
              </Label>
              <DateInput value="09-30" className="mt-[9px] h-11" />
              <Label className="mt-[21px]">Year Range: 2000 - 2022</Label>
              <div className="flex h-[23px] items-center">
                <div className="h-[6px] w-[141px] rounded-l-full bg-[#e9ecef]" />
                <div className="size-[23px] rounded-full bg-[#337ab7]" />
                <div className="-mx-[2px] h-[7px] w-[48px] bg-[#337ab7]" />
                <div className="size-[23px] rounded-full bg-[#337ab7]" />
                <div className="h-[6px] flex-1 rounded-r-full bg-[#e9ecef]" />
              </div>
            </div>
          </div>
        </div>
        <div className="w-[647px]">
          <Label>Selected coordinates</Label>
          <PointMap />
          <div className="mt-[2px] flex h-5 items-center text-[14.400px] whitespace-nowrap text-[#333]">
            Add coordinates using the <FaMapMarkerAlt className="mx-[5px] mb-[2px] h-[14px] w-[13px]" /> tool. View coordinate details by clicking the markers on the map.
          </div>
        </div>
      </div>

      <div className="mt-[93px] flex h-[363px] gap-[39px]">
        <div className="w-[647px]">
          <Label className="mb-[10px]">
            Select the layers to include in the sample <Info className="ml-[6px]" />
          </Label>
          <LayerPicker
            area={false}
            title="ECOSTRESS Evapotranspiration PT-JPL"
            sub="ECO3ETPTJPL.001, 70m, ISS-dependent, (2018-07-09 to Present)"
            layers={[
              "EVAPOTRANSPIRATION_PT_JPL_ETcanopy",
              "EVAPOTRANSPIRATION_PT_JPL_ETinst",
              "EVAPOTRANSPIRATION_PT_JPL_ETinstUncertainty",
              "EVAPOTRANSPIRATION_PT_JPL_ETinterception",
            ]}
          />
        </div>
        <div className="w-[647px]">
          <Label>Selected layers</Label>
          <div className="mt-[10px] h-[310px] rounded-[5px] border-2 border-[#dcdcdc] bg-white px-[25px] pt-[14px]">
            <div className="flex flex-col border-2 border-[#e0e0e0] text-[#555]">
              <div className="flex h-[60px] items-center border-b-2 border-[#e0e0e0] pl-[25px]">
                <Info />
                <span className="ml-[12px] w-[364px]">_250m_16_days_NDVI</span>
                <span className="w-[121px]">250m, 16 day</span>
                <FaMinus className="mb-[3px] size-4 text-[#222]" />
              </div>
              <div className="flex h-[85px] items-center pl-[25px]">
                <Info />
                <span className="ml-[12px] w-[364px] text-[17.900px]">EVAPOTRANSPIRATION_PT_JPL_ETdaily</span>
                <span className="w-[121px] leading-[25.500px]">
                  70m, ISS-
                  <br />
                  dependent
                </span>
                <FaMinus className="mb-[2px] size-4 text-[#222]" />
              </div>
            </div>
          </div>
        </div>
      </div>
      <Buttons className="mt-[28px] mr-[5px] h-[45px]" />
    </div>
  </div>
);

const AreaPanel = () => (
  <div className="flex h-[1920px] w-[1427px] flex-col border-[3px] border-[#7f7f7f] bg-white text-[17.35px]">
    <Navbar area />
    <div className="mt-[71px] ml-[37px] h-10 text-[30.400px] leading-10 text-[#333]">Extract Area Sample</div>
    <div className="mt-5 mr-[38px] ml-[37px] h-[2px] bg-[#eee]" />
    <div className="mt-6 ml-[38px] h-[1646px] w-[1345px] rounded-[6px] border-2 border-[#dcdcdc] bg-[#f5f5f5] pt-[25px] pr-[25px] pl-6">
      <Label>Enter a name to identify your sample</Label>
      <Input className="mt-[9px] h-[41px] w-[627px]">Upper Colorado Basin - MOD13Q1</Input>

      <div className="mt-[25px] flex h-[498px] gap-[38px]">
        <div className="w-[627px]">
          <Label>
            Upload a file or draw a polygon using the
            <svg viewBox="0 0 16 16" className="mx-[4px] mb-[3px] size-[15px]">
              <path d="M8 0L16 6L13 15H3L0 6Z" fill="#333" />
            </svg>
            or
            <span className="mr-[8px] mb-[3px] ml-[6px] size-[12px] bg-[#333]" />
            icon
          </Label>
          <div className="mt-2 h-[275px] rounded-[17px] border-[6px] border-dashed border-[#2f96f3] bg-white pt-[26px] pl-[31px] leading-[24.7px] whitespace-nowrap text-[#333]">
            <div className="font-bold">
              Drop a vector polygon file containing the area feature(s) to extract
              <br />
              or <span className="text-[#337ab7]">click here</span> to select the file.
            </div>
            <div className="mt-[19px]">Supported file formats:</div>
            <div className="mt-[20px] flex items-center">
              <span className="mr-[15px] ml-[30px] size-[5px] rounded-full bg-[#333]" />
              Shapefile&nbsp;<i className="pt-[2px] text-[13.600px]">(.zip including .shp, .dbf, .prj, and .shx files)</i>
            </div>
            <div className="flex items-center">
              <span className="mr-[15px] ml-[30px] size-[5px] rounded-full bg-[#333]" />
              GeoJSON&nbsp;<i className="pt-[2px] text-[13.600px]">(.json or .geojson)</i>
            </div>
          </div>
          <div className="mt-[43px] flex gap-[38px]">
            <div className="w-[294px]">
              <Label>Start Date</Label>
              <DateInput value="01-01-2020" className="mt-[10px] h-[42px]" />
              <div className="mt-[19px] flex h-[26px] items-center whitespace-nowrap">
                <div className="mb-[2px] size-[15px] rounded-[3px] border-[1.500px] border-[#767676] bg-white" />
                <span className="ml-[6px] origin-left scale-x-[1.130] font-bold tracking-[0.200px] text-[#222]">Is Date Recurring?</span>
              </div>
            </div>
            <div className="w-[295px]">
              <Label>
                End Date <Info className="ml-[5px]" />
              </Label>
              <DateInput value="02-01-2022" className="mt-[10px] h-[42px]" />
            </div>
          </div>
        </div>
        <div className="w-[626px]">
          <Label className="-mt-[4px]">Selected file (Upper_Colorado_River_Basin_Boundary)</Label>
          <AreaMap />
          <div className="flex h-5 items-center text-[13.900px] whitespace-nowrap text-[#333]">
            To clear a polygon, draw a new polygon or upload a vector polygon file.
          </div>
        </div>
      </div>

      <div className="mt-[66px] flex h-[353px] gap-[38px]">
        <div className="w-[627px]">
          <Label className="mb-[9px]">
            Select the layers to include in the sample <Info className="ml-[6px]" />
          </Label>
          <LayerPicker
            area
            title="Terra MODIS Vegetation Indices (NDVI & EVI)"
            sub="MOD13Q1.061, 250m, 16 day, (2000-02-18 to Present)"
            layers={["_250m_16_days_EVI", "_250m_16_days_MIR_reflectance", "_250m_16_days_NIR_reflectance", "_250m_16_days_VI_Quality"]}
          />
        </div>
        <div className="w-[626px]">
          <Label>Selected layers</Label>
          <div className="mt-[9px] h-[299px] rounded-[5px] border-2 border-[#dcdcdc] bg-white px-6 pt-[14px]">
            <div className="flex flex-col border-2 border-[#e0e0e0] text-[#555]">
              <div className="flex h-[59px] items-center border-b-2 border-[#e0e0e0] pl-[25px]">
                <Info />
                <span className="ml-[12px] w-[350px]">NASADEM_HGT</span>
                <span className="w-[116px]">30m, Static</span>
                <FaMinus className="mb-[4px] size-4 text-[#222]" />
              </div>
              <div className="flex h-[57px] items-center pl-[25px]">
                <Info />
                <span className="ml-[12px] w-[350px]">_250m_16_days_NDVI</span>
                <span className="w-[116px]">250m, 16 day</span>
                <FaMinus className="mb-[4px] size-4 text-[#222]" />
              </div>
            </div>
          </div>
        </div>
      </div>

      <div className="mx-[12px] mt-[44px] h-[2px] bg-[#e2e2e2]" />
      <Label className="mt-[37px]">Output Options</Label>
      <div className="mt-[10px] h-[343px] w-[1291px] rounded-[5px] border-2 border-[#e0e0e0] bg-white pt-[18px] pl-[18px]">
        <div className="flex items-start">
          <Label className="w-[213px]">File Format:</Label>
          <div className="flex h-[42px] w-[392px] items-center justify-between rounded-[5px] border-2 border-[#d3d6da] pr-[6px] pl-[21px] text-[#555]">
            GeoTiff
            <svg viewBox="0 0 14 9" className="h-[9px] w-[14px]">
              <path d="M1.500 1L7 7L12.500 1" fill="none" stroke="#333" strokeWidth="2.800" />
            </svg>
          </div>
        </div>
        <div className="mt-[25px] flex items-start">
          <Label className="w-[213px]">Projection:</Label>
          <div className="flex h-[38px] w-[392px] items-center justify-between rounded-[4px] border border-[#37618f] bg-[#446e9b] pr-[9px] pl-[13px] font-bold text-white">
            Native Projection
            <Cross className="size-[17px]" />
          </div>
          <Info className="mt-[5px] ml-[43px]" />
        </div>
        <div className="mt-[19px] ml-[213px] h-[108px] w-[1037px] rounded-[5px] border-2 border-[#f3d9bb] bg-[#f6e3cb] pt-[16px] pl-[26px] text-[17.400px] leading-[25px] whitespace-nowrap text-[#6a4a16]">
          <b>NOTE:</b> Be aware that any reprojection of data from its source projection to a different projection will inherently change the data
          <br />
          from its original format. All reprojections use <span className="text-[#3a78b5]">GDAL'sgdalwarp</span> function in combination with the{" "}
          <span className="text-[#3a78b5]">PROJ.4</span> string listed above. For
          <br />
          additional information, see the <i>App</i>EEARS <span className="text-[#3a78b5]">help documentation</span> .
        </div>
      </div>
      <Buttons className="mt-[69px] mr-[4px] h-11" />
    </div>
    <div className="mt-[25px] flex-1 bg-[#eaeaea]" />
  </div>
);

/* ---------- workflow steps ---------- */

const Step = ({ children, className = "" }: Kids) => (
  <div
    className={`flex shrink-0 items-center justify-center rounded-[50%] border-[9px] bg-white text-center text-[64px] leading-[77px] whitespace-nowrap text-black ${className}`}
  >
    <div>{children}</div>
  </div>
);

const Connectors = () => (
  <svg viewBox="0 0 4023 2330" className="pointer-events-none absolute inset-0 size-full" fill="none" strokeWidth="9">
    <g stroke="#dae3f3">
      <path d="M1584 313.500H1000.500V510" />
      <path d="M2443 313.500H3581V510" />
      <path d="M987 507H1014L1000.500 535ZM3567.500 507H3594.500L3581 535Z" fill="#dae3f3" stroke="none" />
    </g>
    <g stroke="#b4c7e7">
      <path d="M1710.500 877V967H377.500V988" />
      <path d="M2317.500 877V963H2620" />
      <path d="M364 986H391L377.500 1013ZM2617 949.500V976.500L2643 963Z" fill="#b4c7e7" stroke="none" />
    </g>
    <g stroke="#8faadc">
      <path d="M1584 1225.500H1526V1557.500H433.500V1580" />
      <path d="M2443 1225.500H2620" />
      <path d="M420 1577.500H447L433.500 1604ZM2616 1212V1239L2643 1225.500Z" fill="#8faadc" stroke="none" />
    </g>
    <g stroke="#2f5597">
      <path d="M2439 1709.500H2620" />
      <path d="M2616 1696V1723L2643 1709.500Z" fill="#2f5597" stroke="none" />
    </g>
    <g stroke="#1f3864">
      <path d="M741.500 2100V2137.500H1556" />
      <path d="M3309.500 2101V2137.500H2463" />
      <path d="M1553 2124V2151L1580 2137.500ZM2466 2124V2151L2440 2137.500Z" fill="#1f3864" stroke="none" />
    </g>
  </svg>
);

export default function App() {
  return (
    <div className="relative flex h-[2330px] w-[4023px] overflow-hidden bg-white font-['Liberation_Sans',Arial,sans-serif]">
      <div className="flex w-[1571px] shrink-0 flex-col pt-[25px] pl-[5px]">
        <Callout text="Point Sample" className="mb-2" />
        <PointPanel />
      </div>
      <div className="flex w-[1025px] shrink-0 flex-col pt-[121px] pl-[5px]">
        <Step className="ml-1 h-96 w-[867px] border-[#dae3f3]">
          Point locations
          <br />
          or
          <br />
          area of interests
        </Step>
        <Step className="mt-[46px] ml-1 h-[383px] w-[867px] border-[#b4c7e7]">
          Date range
          <br />
          or
          <br />
          recurring date
          <br />
          range
        </Step>
        <Step className="mt-[45px] ml-1 h-[493px] w-[867px] border-[#8faadc]">
          Select <span className="underline decoration-[4px] underline-offset-[6px]">variables</span> of
          <br />
          interest (access to
          <br />
          multiple federal
          <br />
          archives)
        </Step>
        <Step className="mt-[45px] h-96 w-[867px] border-[#2f5597]">
          Select output
          <br />
          format and output
          <br />
          CRS/Proj
        </Step>
        <Step className="mt-[45px] h-96 w-[867px] border-[#1f3864]">
          Analysis ready /
          <br />
          reproducible
          <br />
          outputs
        </Step>
      </div>
      <div className="flex w-[1427px] shrink-0 flex-col pt-6">
        <Callout text="Area Sample" className="mb-[9px]" />
        <AreaPanel />
      </div>
      <Connectors />
    </div>
  );
}
